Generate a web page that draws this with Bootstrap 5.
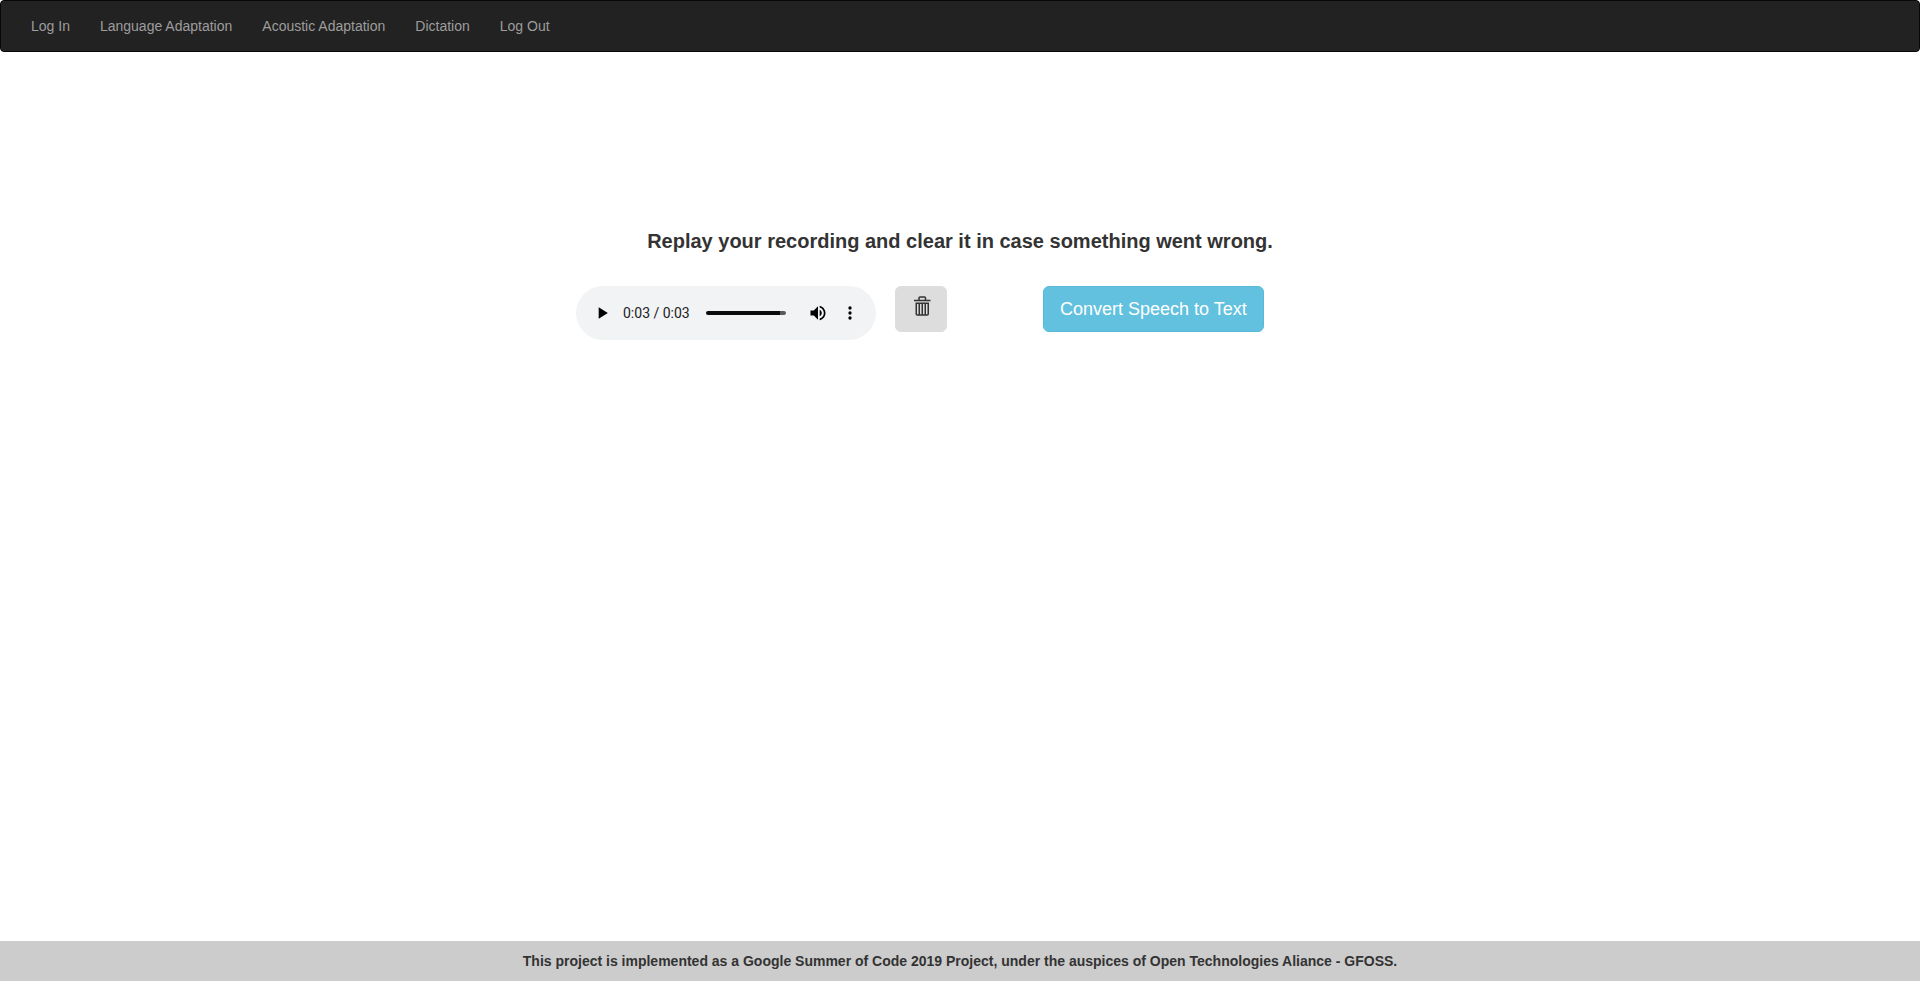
<!DOCTYPE html>
<html lang="en">
<head>
<meta charset="utf-8">
<meta name="viewport" content="width=device-width, initial-scale=1">
<title>Dictation</title>
<link rel="stylesheet" href="https://cdn.jsdelivr.net/npm/bootstrap@5.3.0/dist/css/bootstrap.min.css">
<style>
html { height: 100%; }
body { min-height: 100%; font-family: "Liberation Sans", Arial, sans-serif; font-size: 14px; line-height: 20px; color: #333; background: #fff; }
.top-bar { min-height: 52px; background: #222; border: 1px solid #080808; border-radius: 4px; }
.top-bar .container-fluid { padding: 0 15px; }
.top-bar .navbar-nav .nav-link { color: #9d9d9d; padding: 15px; }
.top-bar .navbar-nav .nav-link:hover { color: #fff; }
.prompt { font-size: 20px; line-height: 22px; margin: 178px 0 34px; }
.recorder { margin-left: 30%; column-gap: 19px; }
.player { width: 300px; height: 54px; padding: 0 10px; border-radius: 27px; background: #f1f3f4; }
.player-btn { width: 32px; height: 32px; padding: 0; border: 0; background: none; color: #000; display: flex; align-items: center; justify-content: center; flex: none; }
.player-time { font-family: Roboto, sans-serif; font-size: 14px; color: #202124; margin-left: 5px; white-space: nowrap; }
.seek { appearance: none; flex: 1; min-width: 0; height: 4px; margin: 0 16px; border-radius: 2px; background: linear-gradient(to right, #0b0b0b 93%, #5b5b5c 93%); }
.seek::-webkit-slider-thumb { appearance: none; width: 4px; height: 4px; opacity: 0; }
.btn-tall { height: 46px; padding: 10px 16px; font-size: 18px; line-height: 24px; border-radius: 6px; }
.btn-clear { width: 52px; background: #ddd; border-color: #ddd; color: #333; padding: 9px 16px 9px 18px; display: flex; }
.btn-convert { background: #62c1de; border-color: #58b9d9; color: #fff; margin-left: 77px; }
.btn-clear:hover { background: #ccc; }
.btn-convert:hover { background: #31b0d5; color: #fff; }
.page-foot { background: #ccc; padding: 10px; }
</style>
</head>
<body class="d-flex flex-column">
<nav class="top-bar navbar navbar-expand p-0" aria-label="Main">
  <div class="container-fluid justify-content-start">
    <ul class="navbar-nav">
      <li class="nav-item"><a class="nav-link" href="#login">Log In</a></li>
      <li class="nav-item"><a class="nav-link" href="#language">Language Adaptation</a></li>
      <li class="nav-item"><a class="nav-link" href="#acoustic">Acoustic Adaptation</a></li>
      <li class="nav-item"><a class="nav-link" href="#dictation">Dictation</a></li>
      <li class="nav-item"><a class="nav-link" href="#logout">Log Out</a></li>
    </ul>
  </div>
</nav>
<main class="flex-grow-1">
  <h1 class="prompt fw-bold text-center">Replay your recording and clear it in case something went wrong.</h1>
  <div class="recorder d-flex align-items-start">
    <div class="player d-flex align-items-center" role="group" aria-label="Recording">
      <button type="button" class="player-btn" aria-label="Play"><svg width="20" height="20" viewBox="0 0 24 24" fill="currentColor"><path d="M8 5v14l11-7z"/></svg></button>
      <span class="player-time">0:03 / 0:03</span>
      <input type="range" class="seek" min="0" max="100" value="93" aria-label="Position">
      <button type="button" class="player-btn" aria-label="Mute"><svg width="20" height="20" viewBox="0 0 24 24" fill="currentColor"><path d="M3 9v6h4l5 5V4L7 9H3zm13.500 3c0-1.770-1.020-3.290-2.500-4.030v8.050c1.480-.730 2.500-2.250 2.500-4.020zM14 3.230v2.060c2.890.860 5 3.540 5 6.710s-2.110 5.850-5 6.710v2.060c4.010-.910 7-4.490 7-8.770s-2.990-7.860-7-8.770z"/></svg></button>
      <button type="button" class="player-btn" aria-label="More options"><svg width="20" height="20" viewBox="0 0 24 24" fill="currentColor"><circle cx="12" cy="6" r="2"/><circle cx="12" cy="12" r="2"/><circle cx="12" cy="18" r="2"/></svg></button>
    </div>
    <button type="button" class="btn btn-tall btn-clear" aria-label="Clear recording">
      <svg width="18" height="20" viewBox="0 0 18 20" fill="none" stroke="currentColor" stroke-width="1.500" class="flex-shrink-0"><path d="M0 4.500H16.500M5 4V2Q5 1 6 1H10.500Q11.500 1 11.500 2V4M2.250 7.200H14.250V18Q14.250 19 13.250 19H3.250Q2.250 19 2.250 18ZM5.250 7V19M8.250 7V19M11.250 7V19"/></svg>
    </button>
    <button type="button" class="btn btn-tall btn-convert">Convert Speech to Text</button>
  </div>
</main>
<footer class="page-foot text-center fw-bold">This project is implemented as a Google Summer of Code 2019 Project, under the auspices of Open Technologies Aliance - GFOSS.</footer>
<script src="https://cdn.jsdelivr.net/npm/bootstrap@5.3.0/dist/js/bootstrap.bundle.min.js"></script>
</body>
</html>
